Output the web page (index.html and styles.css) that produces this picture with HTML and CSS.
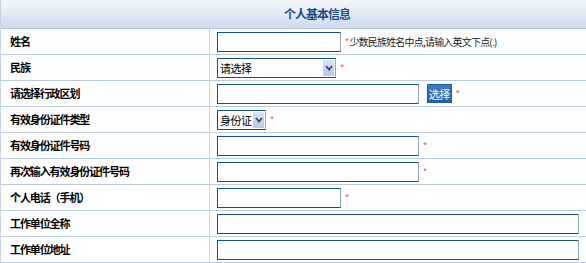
FILE: index.html
```html
<!DOCTYPE html>
<html lang="zh-CN">
<head>
    <meta charset="UTF-8">
    <title>个人基本信息</title>
    <link rel="stylesheet" href="styles.css">
</head>
<body>
    <table class="info-table">
        <tr>
            <th colspan="2" class="title">个人基本信息</th>
        </tr>
        <tr>
            <td class="label">姓名</td>
            <td class="field">
                <input type="text" class="txt short">
                <span class="req">*</span><span class="tip">少数民族姓名中点,请输入英文下点(.)</span>
            </td>
        </tr>
        <tr>
            <td class="label">民族</td>
            <td class="field">
                <span class="sel sel-nation">
                    <select><option>请选择</option></select>
                    <span class="arrow"><svg width="8" height="6" viewBox="0 0 8 6"><path d="M1 1 L4 4.5 L7 1" fill="none" stroke="#2a4f7a" stroke-width="1.8"/></svg></span>
                </span>
                <span class="req">*</span>
            </td>
        </tr>
        <tr>
            <td class="label">请选择行政区划</td>
            <td class="field">
                <input type="text" class="txt mid">
                <button class="btn">选择</button>
                <span class="req">*</span>
            </td>
        </tr>
        <tr>
            <td class="label">有效身份证件类型</td>
            <td class="field">
                <span class="sel sel-type">
                    <select><option>身份证</option></select>
                    <span class="arrow"><svg width="8" height="6" viewBox="0 0 8 6"><path d="M1 1 L4 4.5 L7 1" fill="none" stroke="#2a4f7a" stroke-width="1.8"/></svg></span>
                </span>
                <span class="req">*</span>
            </td>
        </tr>
        <tr>
            <td class="label">有效身份证件号码</td>
            <td class="field">
                <input type="text" class="txt mid">
                <span class="req">*</span>
            </td>
        </tr>
        <tr>
            <td class="label">再次输入有效身份证件号码</td>
            <td class="field">
                <input type="text" class="txt mid">
                <span class="req">*</span>
            </td>
        </tr>
        <tr>
            <td class="label">个人电话（手机）</td>
            <td class="field">
                <input type="text" class="txt short">
                <span class="req">*</span>
            </td>
        </tr>
        <tr>
            <td class="label">工作单位全称</td>
            <td class="field">
                <input type="text" class="txt long">
            </td>
        </tr>
        <tr>
            <td class="label">工作单位地址</td>
            <td class="field">
                <input type="text" class="txt long">
            </td>
        </tr>
    </table>
</body>
</html>
```

FILE: styles.css
```css
body {
    margin: 0;
    padding: 0;
    background: #fff;
    font-family: "Noto Sans CJK SC", "Liberation Sans", sans-serif;
    font-size: 12px;
    color: #000;
}
.info-table {
    width: 586px;
    border-collapse: collapse;
    border-left: 1px solid #c6d4e8;
}
.info-table td,
.info-table th {
    border-bottom: 1px solid #b9cbe4;
    padding: 0;
}
.title {
    height: 28px;
    background: linear-gradient(#f3f7fc, #e4ecf6 45%, #cbd9ec);
    color: #1d4a82;
    font-size: 12px;
    letter-spacing: -1px;
    font-weight: bold;
    text-align: left;
    padding-left: 283px !important;
    line-height: 28px;
    border-bottom: 1px solid #b5c7e2 !important;
}
.label {
    width: 199px;
    height: 25px;
    padding-left: 9px !important;
    font-size: 11px;
    letter-spacing: -1.1px;
    font-weight: bold;
    border-right: 1px solid #c6d4e8;
    line-height: 25px;
}
.field {
    padding-left: 7px !important;
    height: 25px;
    white-space: nowrap;
}
.txt {
    box-sizing: border-box;
    height: 20px;
    margin: 0;
    padding: 0 2px;
    border: 1px solid #1b4f7e;
    border-right-color: #8ba6bd;
    vertical-align: middle;
    font-size: 12px;
    background: #fff;
}
.short { width: 124px; }
.mid { width: 202px; }
.long { width: 362px; }
.req {
    color: #f0507a;
    font-size: 10px;
    vertical-align: middle;
    margin-left: 1px;
}
.tip {
    font-size: 10px;
    letter-spacing: -0.8px;
    color: #222;
    vertical-align: middle;
}
.sel {
    position: relative;
    display: inline-block;
    vertical-align: middle;
}
.sel select {
    appearance: none;
    -webkit-appearance: none;
    box-sizing: border-box;
    height: 20px;
    margin: 0;
    padding: 0 0 0 2px;
    border: 1px solid #1b4f7e;
    border-right-color: #8ba6bd;
    background: #fff;
    font-family: "Noto Sans CJK SC", sans-serif;
    font-size: 11px;
    letter-spacing: -0.5px;
    color: #000;
    display: block;
}
.sel-nation select { width: 119px; }
.sel-type select { width: 49px; }
.arrow {
    position: absolute;
    top: 2px;
    right: 2px;
    width: 11px;
    height: 16px;
    background: linear-gradient(#d4e2f6, #b3c9ea);
    display: flex;
    align-items: center;
    justify-content: center;
}
.btn {
    height: 19px;
    margin: 0 0 0 5px;
    padding: 0 1px;
    border: 1px solid #1f5ea6;
    background: linear-gradient(#3a7cc4, #2462a8);
    color: #fff;
    font-family: "Noto Sans CJK SC", sans-serif;
    font-size: 11px;
    letter-spacing: -0.5px;
    line-height: 16px;
    vertical-align: middle;
}
```
